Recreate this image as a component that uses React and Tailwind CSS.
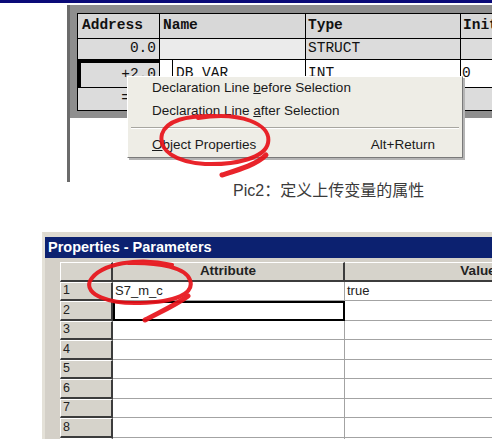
import React from 'react';

const topCols = ['w-[82px]', 'w-[146px]', 'w-[155px]', 'w-[110px]'];

const TopCell = ({ w, className = '', children }) => (
    <div className={`${w} shrink-0 h-full border-r border-b border-black flex items-center whitespace-nowrap ${className}`}>
        {children}
    </div>
);

const ContextMenu = () => (
    <div className="absolute left-[57px] top-[71px] w-[336px] h-[82px] bg-[#eeede6] border-t border-l border-t-white border-l-white border-r border-b border-r-[#7a7a7a] border-b-[#7a7a7a] shadow-[2px_2px_0_#b5b5b5] text-[13.5px] text-[#1a1a1a] font-['Liberation_Sans',sans-serif] whitespace-nowrap">
        <div className="h-[23px] flex items-center pl-[24px]">
            <span>Declaration Line <span className="underline">b</span>efore Selection</span>
        </div>
        <div className="h-[23px] flex items-center pl-[24px]">
            <span>Declaration Line <span className="underline">a</span>fter Selection</span>
        </div>
        <div className="h-[10px] flex flex-col justify-center px-[3px]">
            <div className="h-px bg-[#a7a6a0]" />
            <div className="h-px bg-white" />
        </div>
        <div className="h-[24px] flex items-center justify-between pl-[24px] pr-[27px]">
            <span><span className="underline">O</span>bject Properties</span>
            <span>Alt+Return</span>
        </div>
    </div>
);

const TopWindow = () => (
    <div className="relative ml-[67px] mt-[2px] h-[177px] border-l-[3px] border-[#6b6b6b] bg-white">
        <div className="bg-[#8e8e8e] pl-[7px] pt-[8px] pb-[7px] overflow-hidden">
            <div className="w-[600px] border-t border-l border-black font-['Liberation_Mono',monospace] text-[14.5px] text-[#111]">
                <div className="flex h-[25px] bg-[#d8d8d8] font-bold">
                    <TopCell w={topCols[0]} className="pl-[4px]">Address</TopCell>
                    <TopCell w={topCols[1]} className="pl-[3px]">Name</TopCell>
                    <TopCell w={topCols[2]} className="pl-[2px]">Type</TopCell>
                    <TopCell w={topCols[3]} className="pl-[2px]">Initial value</TopCell>
                </div>
                <div className="flex h-[21px] bg-[#dcdcdc]">
                    <TopCell w={topCols[0]} className="justify-end pr-[3px]">0.0</TopCell>
                    <TopCell w={topCols[1]} className="bg-[#ebebeb]" />
                    <TopCell w={topCols[2]} className="pl-[2px]">STRUCT</TopCell>
                    <TopCell w={topCols[3]} />
                </div>
                <div className="flex h-[28px] bg-white">
                    <TopCell w={topCols[0]} className="justify-end pr-[3px] bg-[#dcdcdc] border-[3px] border-[#2f8f8c]">+2.0</TopCell>
                    <TopCell w={topCols[1]} className="pl-[12px]">
                        <div className="h-full border-l border-black pl-[3px] flex items-center">DB_VAR</div>
                    </TopCell>
                    <TopCell w={topCols[2]} className="pl-[2px]">INT</TopCell>
                    <TopCell w={topCols[3]} className="pl-[1px]">0</TopCell>
                </div>
                <div className="flex h-[23px] bg-[#dcdcdc]">
                    <TopCell w={topCols[0]} className="justify-end pr-[3px]">=4.0</TopCell>
                    <TopCell w={topCols[1]} />
                    <TopCell w={topCols[2]} />
                    <TopCell w={topCols[3]} />
                </div>
            </div>
        </div>
        <ContextMenu />
    </div>
);

const rows = [1, 2, 3, 4, 5, 6, 7, 8, 9];

const PropertiesWindow = () => (
    <div className="ml-[42px] mt-[32px] h-[207px] bg-[#d4d0c8] border-t-[5px] border-l-[3px] border-t-[#dedad0] border-l-[#e4e1d8] overflow-hidden font-['Liberation_Sans',sans-serif]">
        <div className="h-[21px] bg-[#0c2170] text-white font-bold text-[14.5px] flex items-center pl-[3px]">
            Properties - Parameters
        </div>
        <div className="pl-[15px] pt-[4px]">
            <div className="w-[560px] bg-white text-[13px] text-[#222]">
                <div className="flex h-[19.5px]">
                    <div className="w-[53px] shrink-0 bg-[#d6d3cb] border-t border-l border-white border-r-2 border-b-2 border-r-[#3c3c3c] border-b-[#3c3c3c]" />
                    <div className="w-[232px] shrink-0 bg-[#d6d3cb] border-t border-white border-r-2 border-b-2 border-r-[#3c3c3c] border-b-[#3c3c3c] flex items-center justify-center font-bold text-[13.5px]">Attribute</div>
                    <div className="w-[266px] shrink-0 bg-[#d6d3cb] border-t border-white border-b-2 border-b-[#3c3c3c] flex items-center justify-center font-bold text-[13.5px]">Value</div>
                </div>
                {rows.map((n) => (
                    <div key={n} className="flex h-[19.5px]">
                        <div className="w-[53px] shrink-0 bg-[#d6d3cb] border-t border-l border-white border-r-2 border-b-2 border-r-[#3c3c3c] border-b-[#3c3c3c] flex items-center pl-[2px] text-[12.5px]">{n < 9 ? n : ''}</div>
                        <div className={`w-[232px] shrink-0 flex items-center pl-[2px] ${n === 2 ? 'border-2 border-black' : 'border-r border-b border-[#a3a3a3]'}`}>
                            {n === 1 ? 'S7_m_c' : ''}
                        </div>
                        <div className="w-[266px] shrink-0 border-b border-[#a3a3a3] flex items-center pl-[2px]">
                            {n === 1 ? 'true' : ''}
                        </div>
                    </div>
                ))}
            </div>
        </div>
    </div>
);

const RedMarks = () => (
    <svg className="absolute inset-0 pointer-events-none" width="492" height="439" viewBox="0 0 492 439">
        <g fill="none" stroke="#e8121a" strokeLinecap="round" strokeLinejoin="round" opacity="0.92">
            <path strokeWidth="4" d="M198 118 C240 111 272 124 268 143 C265 158 236 165 205 164 C176 162 158 151 162 134 C166 121 186 115 216 116" />
            <path strokeWidth="5" d="M266 155 C256 165 238 170 222 175" />
            <path strokeWidth="4" d="M172 265 C140 257 100 263 90 281 C84 295 110 304 140 303 C175 302 195 294 190 280 C186 268 160 262 128 263" />
            <path strokeWidth="5" d="M188 296 C176 305 160 312 145 320" />
        </g>
    </svg>
);

export default function App() {
    return (
        <div className="relative w-[492px] h-[439px] overflow-hidden bg-white">
            <div className="h-[3px] bg-[#0a0a78]" />
            <TopWindow />
            <div className="h-[18px] pl-[233px] flex items-center text-[16px] leading-[18px] text-[#3a3a3a] font-['Liberation_Sans','Noto_Sans_CJK_SC',sans-serif]">
                Pic2：定义上传变量的属性
            </div>
            <PropertiesWindow />
            <RedMarks />
        </div>
    );
}
